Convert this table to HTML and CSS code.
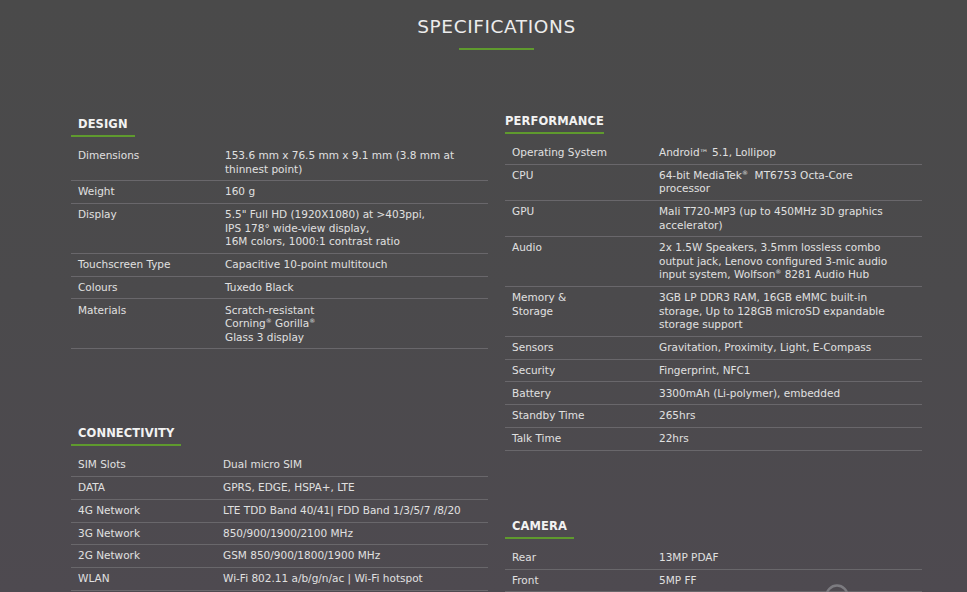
FILE: index.html
```html
<!DOCTYPE html>
<html lang="en">
<head>
<meta charset="utf-8">
<title>Specifications</title>
<link rel="stylesheet" href="styles.css">
</head>
<body>
<main class="specs">
  <header class="specs-head">
    <h1 class="specs-title">SPECIFICATIONS</h1>
    <div class="specs-rule"></div>
  </header>

  <div class="specs-grid">
    <div class="specs-col specs-col--left">
      <section class="spec-section">
        <h2 class="spec-heading">DESIGN</h2>
        <div class="spec-table">
          <div class="spec-row"><div class="spec-label">Dimensions</div><div class="spec-value">153.6 mm x 76.5 mm x 9.1 mm (3.8 mm at<br>thinnest point)</div></div>
          <div class="spec-row"><div class="spec-label">Weight</div><div class="spec-value">160 g</div></div>
          <div class="spec-row"><div class="spec-label">Display</div><div class="spec-value">5.5" Full HD (1920X1080) at &gt;403ppi,<br>IPS 178° wide-view display,<br>16M colors, 1000:1 contrast ratio</div></div>
          <div class="spec-row"><div class="spec-label">Touchscreen Type</div><div class="spec-value">Capacitive 10-point multitouch</div></div>
          <div class="spec-row"><div class="spec-label">Colours</div><div class="spec-value">Tuxedo Black</div></div>
          <div class="spec-row"><div class="spec-label">Materials</div><div class="spec-value">Scratch-resistant<br>Corning<sup class="reg">®</sup> Gorilla<sup class="reg">®</sup><br>Glass 3 display</div></div>
        </div>
      </section>

      <section class="spec-section spec-section--connectivity">
        <h2 class="spec-heading">CONNECTIVITY</h2>
        <div class="spec-table spec-table--narrow">
          <div class="spec-row"><div class="spec-label">SIM Slots</div><div class="spec-value">Dual micro SIM</div></div>
          <div class="spec-row"><div class="spec-label">DATA</div><div class="spec-value">GPRS, EDGE, HSPA+, LTE</div></div>
          <div class="spec-row"><div class="spec-label">4G Network</div><div class="spec-value">LTE TDD Band 40/41| FDD Band 1/3/5/7 /8/20</div></div>
          <div class="spec-row"><div class="spec-label">3G Network</div><div class="spec-value">850/900/1900/2100 MHz</div></div>
          <div class="spec-row"><div class="spec-label">2G Network</div><div class="spec-value">GSM 850/900/1800/1900 MHz</div></div>
          <div class="spec-row"><div class="spec-label">WLAN</div><div class="spec-value">Wi-Fi 802.11 a/b/g/n/ac | Wi-Fi hotspot</div></div>
        </div>
      </section>
    </div>

    <div class="specs-col specs-col--right">
      <section class="spec-section">
        <h2 class="spec-heading spec-heading--flush">PERFORMANCE</h2>
        <div class="spec-table">
          <div class="spec-row"><div class="spec-label">Operating System</div><div class="spec-value">Android<span class="tm">™</span> 5.1, Lollipop</div></div>
          <div class="spec-row"><div class="spec-label">CPU</div><div class="spec-value">64-bit MediaTek<sup class="reg">®</sup>&nbsp; MT6753 Octa-Core<br>processor</div></div>
          <div class="spec-row"><div class="spec-label">GPU</div><div class="spec-value">Mali T720-MP3 (up to 450MHz 3D graphics<br>accelerator)</div></div>
          <div class="spec-row"><div class="spec-label">Audio</div><div class="spec-value">2x 1.5W Speakers, 3.5mm lossless combo<br>output jack, Lenovo configured 3-mic audio<br>input system, Wolfson<sup class="reg">®</sup> 8281 Audio Hub</div></div>
          <div class="spec-row"><div class="spec-label">Memory &amp;<br>Storage</div><div class="spec-value">3GB LP DDR3 RAM, 16GB eMMC built-in<br>storage, Up to 128GB microSD expandable<br>storage support</div></div>
          <div class="spec-row"><div class="spec-label">Sensors</div><div class="spec-value">Gravitation, Proximity, Light, E-Compass</div></div>
          <div class="spec-row"><div class="spec-label">Security</div><div class="spec-value">Fingerprint, NFC1</div></div>
          <div class="spec-row"><div class="spec-label">Battery</div><div class="spec-value">3300mAh (Li-polymer), embedded</div></div>
          <div class="spec-row"><div class="spec-label">Standby Time</div><div class="spec-value">265hrs</div></div>
          <div class="spec-row"><div class="spec-label">Talk Time</div><div class="spec-value">22hrs</div></div>
        </div>
      </section>

      <section class="spec-section spec-section--camera">
        <h2 class="spec-heading">CAMERA</h2>
        <div class="spec-table">
          <div class="spec-row"><div class="spec-label">Rear</div><div class="spec-value">13MP PDAF</div></div>
          <div class="spec-row"><div class="spec-label">Front</div><div class="spec-value">5MP FF</div></div>
        </div>
      </section>
    </div>
  </div>
</main>

<div class="scroll-indicator" aria-hidden="true">
  <svg width="26" height="26" viewBox="0 0 26 26"><circle cx="13" cy="13" r="10.5" fill="none" stroke="#7c7b80" stroke-width="2.4"/></svg>
</div>
</body>
</html>
```

FILE: styles.css
```css
html, body {
  margin: 0;
  padding: 0;
}

body {
  height: 592px;
  overflow: hidden;
  background: linear-gradient(180deg, #4a4a4a 0%, #4b4a4c 50%, #4e4a50 100%);
  color: #e2e2e2;
  font-family: "DejaVu Sans", "Liberation Sans", sans-serif;
  position: relative;
}

.specs {
  width: 851px;
  margin-left: 71px;
}

.specs-head {
  padding-top: 16px;
  display: flex;
  flex-direction: column;
  align-items: center;
}

.specs-title {
  margin: 0;
  font-size: 18.5px;
  line-height: 22px;
  font-weight: 400;
  letter-spacing: 0.6px;
  color: #ececec;
}

.specs-rule {
  width: 75px;
  height: 2px;
  margin-top: 10px;
  background: #5f9a2e;
}

.specs-grid {
  display: grid;
  grid-template-columns: 417px 417px;
  column-gap: 17px;
  align-items: start;
  margin-top: 64px;
}

.specs-col--left {
  padding-top: 3px;
}

.spec-section {
  display: flex;
  flex-direction: column;
  align-items: stretch;
}

.spec-section--connectivity {
  margin-top: 77px;
}

.spec-section--camera {
  margin-top: 68px;
}

.spec-heading {
  align-self: flex-start;
  margin: 0 0 8px;
  padding: 0 7px 4px;
  font-size: 11.5px;
  line-height: 14px;
  font-weight: 700;
  letter-spacing: 0.1px;
  color: #f2f2f2;
  border-bottom: 2px solid #5f9a2e;
}

.spec-heading--flush {
  padding-left: 0;
  padding-right: 0;
}

.spec-table {
  display: flex;
  flex-direction: column;
}

.spec-row {
  display: flex;
  padding: 4.15px 0;
  border-bottom: 1px solid #69676b;
  font-size: 10.5px;
  line-height: 13.5px;
  color: #e0e0e0;
}

.spec-label {
  width: 147px;
  flex: none;
  padding-left: 7px;
}

.spec-table--narrow .spec-label {
  width: 145px;
}

.spec-value {
  flex: 1;
}

.reg {
  font-size: 6px;
  line-height: 0;
  vertical-align: 4px;
}

.tm {
  font-size: 9px;
  line-height: 0;
}

.scroll-indicator {
  position: absolute;
  left: 824px;
  top: 583px;
  width: 26px;
  height: 26px;
}
```
